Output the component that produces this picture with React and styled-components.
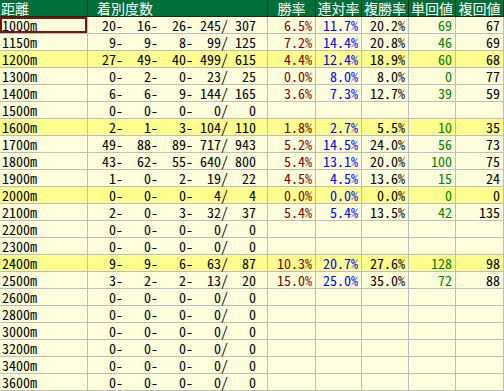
import styled, { createGlobalStyle } from "styled-components"

const GlobalStyle = createGlobalStyle`
    body {
        margin: 0;
        background: #ffffff;
    }
`

const Grid = styled.div`
    display: grid;
    grid-template-columns: 88px 180px 48px 46px 47px 47px 48px;
    grid-auto-rows: 17px;
    width: 504px;
    font-family: "Noto Sans CJK JP", sans-serif;
    font-feature-settings: "hwid";
    font-size: 14px;
`

const HeadCell = styled.div`
    box-sizing: border-box;
    background: #006f3a;
    color: #ffffff;
    border-right: 1px solid #0d2f1a;
    border-bottom: 1px solid #0d2f1a;
    line-height: 16px;
    white-space: nowrap;
    text-align: ${p => p.$align || "center"};
    padding-left: ${p => p.$indent || 0}px;
`

const Cell = styled.div`
    box-sizing: border-box;
    background: ${p => (p.$hl ? "#fefe8e" : "#ffffde")};
    color: ${p => p.$color || "#000000"};
    border-right: 1px solid #bdbdbd;
    border-bottom: 1px solid #bdbdbd;
    line-height: 16px;
    white-space: pre;
    text-align: ${p => p.$align || "right"};
    padding: 0 ${p => p.$pr ?? 3}px 0 ${p => p.$pl ?? 0}px;
    box-shadow: ${p => (p.$selected ? "inset 0 0 0 2px #7d1414" : "none")};
`

const rows = [
    ["1000m", [20, 16, 26, 245, 307], "6.5%", "11.7%", "20.2%", "69", "67"],
    ["1150m", [9, 9, 8, 99, 125], "7.2%", "14.4%", "20.8%", "46", "69"],
    ["1200m", [27, 49, 40, 499, 615], "4.4%", "12.4%", "18.9%", "60", "68", true],
    ["1300m", [0, 2, 0, 23, 25], "0.0%", "8.0%", "8.0%", "0", "77"],
    ["1400m", [6, 6, 9, 144, 165], "3.6%", "7.3%", "12.7%", "39", "59"],
    ["1500m", [0, 0, 0, 0, 0]],
    ["1600m", [2, 1, 3, 104, 110], "1.8%", "2.7%", "5.5%", "10", "35", true],
    ["1700m", [49, 88, 89, 717, 943], "5.2%", "14.5%", "24.0%", "56", "73"],
    ["1800m", [43, 62, 55, 640, 800], "5.4%", "13.1%", "20.0%", "100", "75"],
    ["1900m", [1, 0, 2, 19, 22], "4.5%", "4.5%", "13.6%", "15", "24"],
    ["2000m", [0, 0, 0, 4, 4], "0.0%", "0.0%", "0.0%", "0", "0", true],
    ["2100m", [2, 0, 3, 32, 37], "5.4%", "5.4%", "13.5%", "42", "135"],
    ["2200m", [0, 0, 0, 0, 0]],
    ["2300m", [0, 0, 0, 0, 0]],
    ["2400m", [9, 9, 6, 63, 87], "10.3%", "20.7%", "27.6%", "128", "98", true],
    ["2500m", [3, 2, 2, 13, 20], "15.0%", "25.0%", "35.0%", "72", "88"],
    ["2600m", [0, 0, 0, 0, 0]],
    ["2800m", [0, 0, 0, 0, 0]],
    ["3000m", [0, 0, 0, 0, 0]],
    ["3200m", [0, 0, 0, 0, 0]],
    ["3400m", [0, 0, 0, 0, 0]],
    ["3600m", [0, 0, 0, 0, 0]],
]

const pad = (n, w) => String(n).padStart(w, " ")

function record([a, b, c, d, total]) {
    return `${pad(a, 4)}-${pad(b, 4)}-${pad(c, 4)}-${pad(d, 4)}/${pad(total, 4)}`
}

export default function App() {
    return <>
        <GlobalStyle />
        <Grid>
            <HeadCell $align="left" $indent={1}>距離</HeadCell>
            <HeadCell $align="left" $indent={9}>着別度数</HeadCell>
            <HeadCell>勝率</HeadCell>
            <HeadCell>連対率</HeadCell>
            <HeadCell>複勝率</HeadCell>
            <HeadCell>単回値</HeadCell>
            <HeadCell>複回値</HeadCell>

            {rows.map(([dist, rec, win, ren, fuku, tan, fukuVal, hl], i) => <>
                <Cell key={dist} $hl={hl} $align="left" $pl={2} $pr={0} $selected={i === 0}>{dist}</Cell>
                <Cell $hl={hl} $pr={12}>{record(rec)}</Cell>
                <Cell $hl={hl} $color="#800000">{win}</Cell>
                <Cell $hl={hl} $color="#0000ff">{ren}</Cell>
                <Cell $hl={hl}>{fuku}</Cell>
                <Cell $hl={hl} $color="#008000">{tan}</Cell>
                <Cell $hl={hl}>{fukuVal}</Cell>
            </>)}
        </Grid>
    </>
}
